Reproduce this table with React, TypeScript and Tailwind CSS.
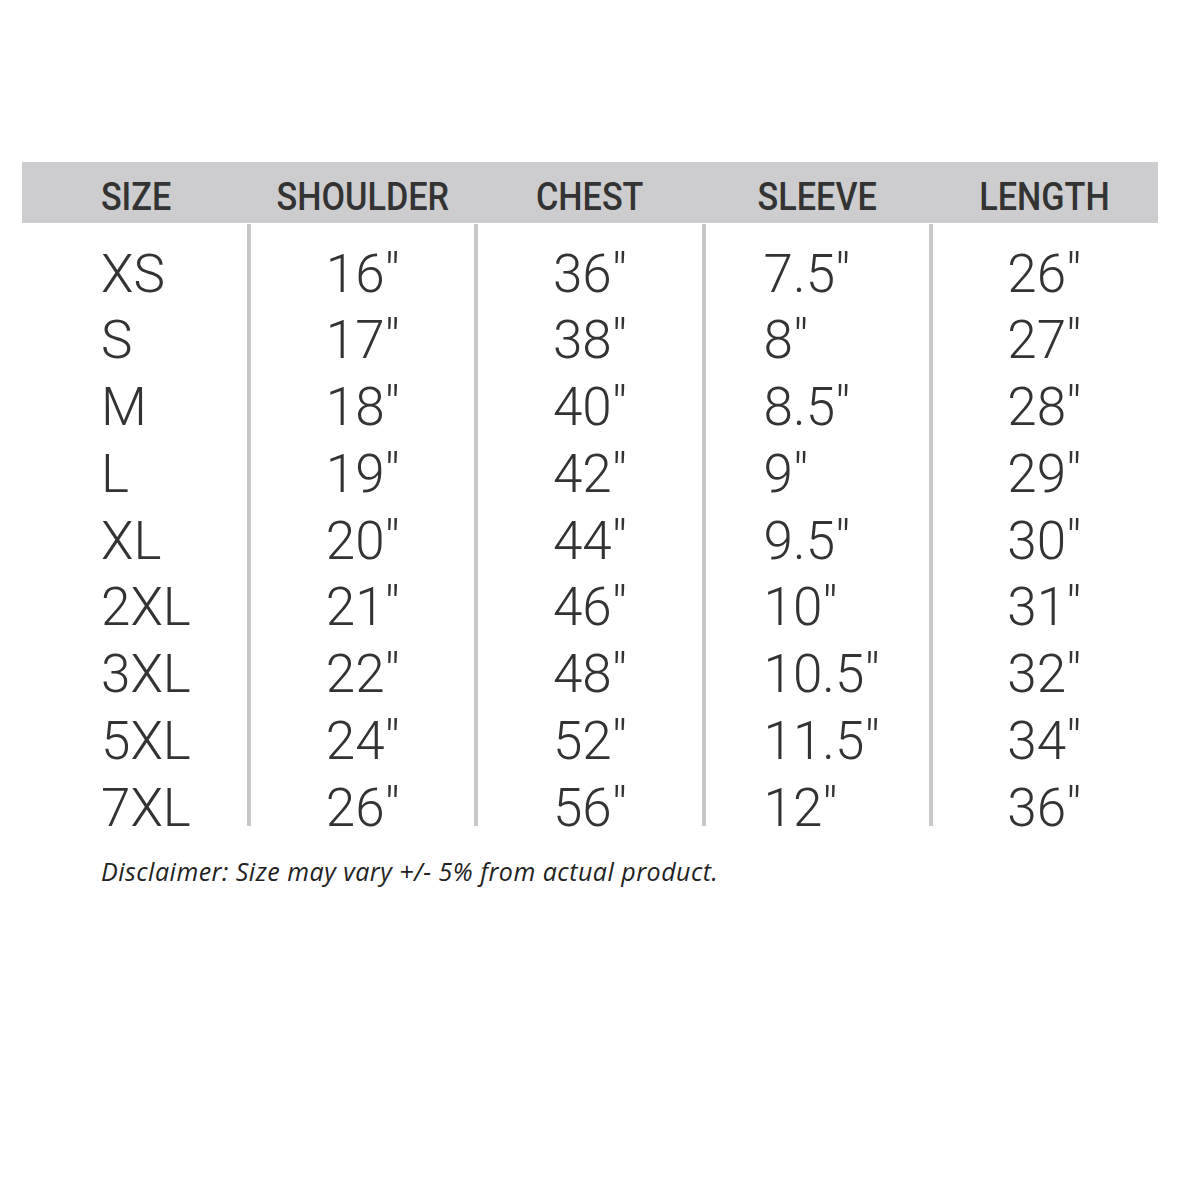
import React from "react";

const rows = [
  ["XS", '16"', '36"', '7.5"', '26"'],
  ["S", '17"', '38"', '8"', '27"'],
  ["M", '18"', '40"', '8.5"', '28"'],
  ["L", '19"', '42"', '9"', '29"'],
  ["XL", '20"', '44"', '9.5"', '30"'],
  ["2XL", '21"', '46"', '10"', '31"'],
  ["3XL", '22"', '48"', '10.5"', '32"'],
  ["5XL", '24"', '52"', '11.5"', '34"'],
  ["7XL", '26"', '56"', '12"', '36"'],
];

const headers = ["SIZE", "SHOULDER", "CHEST", "SLEEVE", "LENGTH"];

const colClasses = [
  "pl-[81px] text-left",
  "border-l-4 border-[#c8c8c8] text-center",
  "border-l-4 border-[#c8c8c8] text-center",
  "border-l-4 border-[#c8c8c8] pl-[58px] text-left",
  "border-l-4 border-[#c8c8c8] text-center",
];

export default function App() {
  return (
    <div className="w-[1200px] h-[1200px] bg-white pt-[162px]" style={{ fontFamily: "Roboto, 'Liberation Sans', sans-serif" }}>
      <div className="ml-[22px] w-[1136px] h-[61px] bg-[#cdcdcf] grid grid-cols-5 pt-[9px]">
        {headers.map((h) => (
          <div key={h} className="text-center leading-[52px] text-[38px] font-medium text-[#333333]">
            <span className="inline-block scale-x-[0.9]">{h}</span>
          </div>
        ))}
      </div>
      <div className="ml-[20px] w-[1136px] mt-[1px] flex">
        {colClasses.map((cls, ci) => (
          <div key={ci} className={`w-[227.2px] shrink-0 h-[602px] pt-[16.5px] ${cls}`}>
            {rows.map((r, ri) => (
              <div key={ri} className="text-[53px] leading-[66.75px] font-light text-[#333333] whitespace-nowrap">
                {r[ci]}
              </div>
            ))}
          </div>
        ))}
      </div>
      <div
        className="ml-[101px] mt-[31px] text-[25px] italic text-[#222222] leading-[28px] tracking-[0.5px] whitespace-nowrap"
        style={{ fontFamily: "'Open Sans', sans-serif" }}
      >
        Disclaimer: Size may vary +/- 5% from actual product.
      </div>
    </div>
  );
}
